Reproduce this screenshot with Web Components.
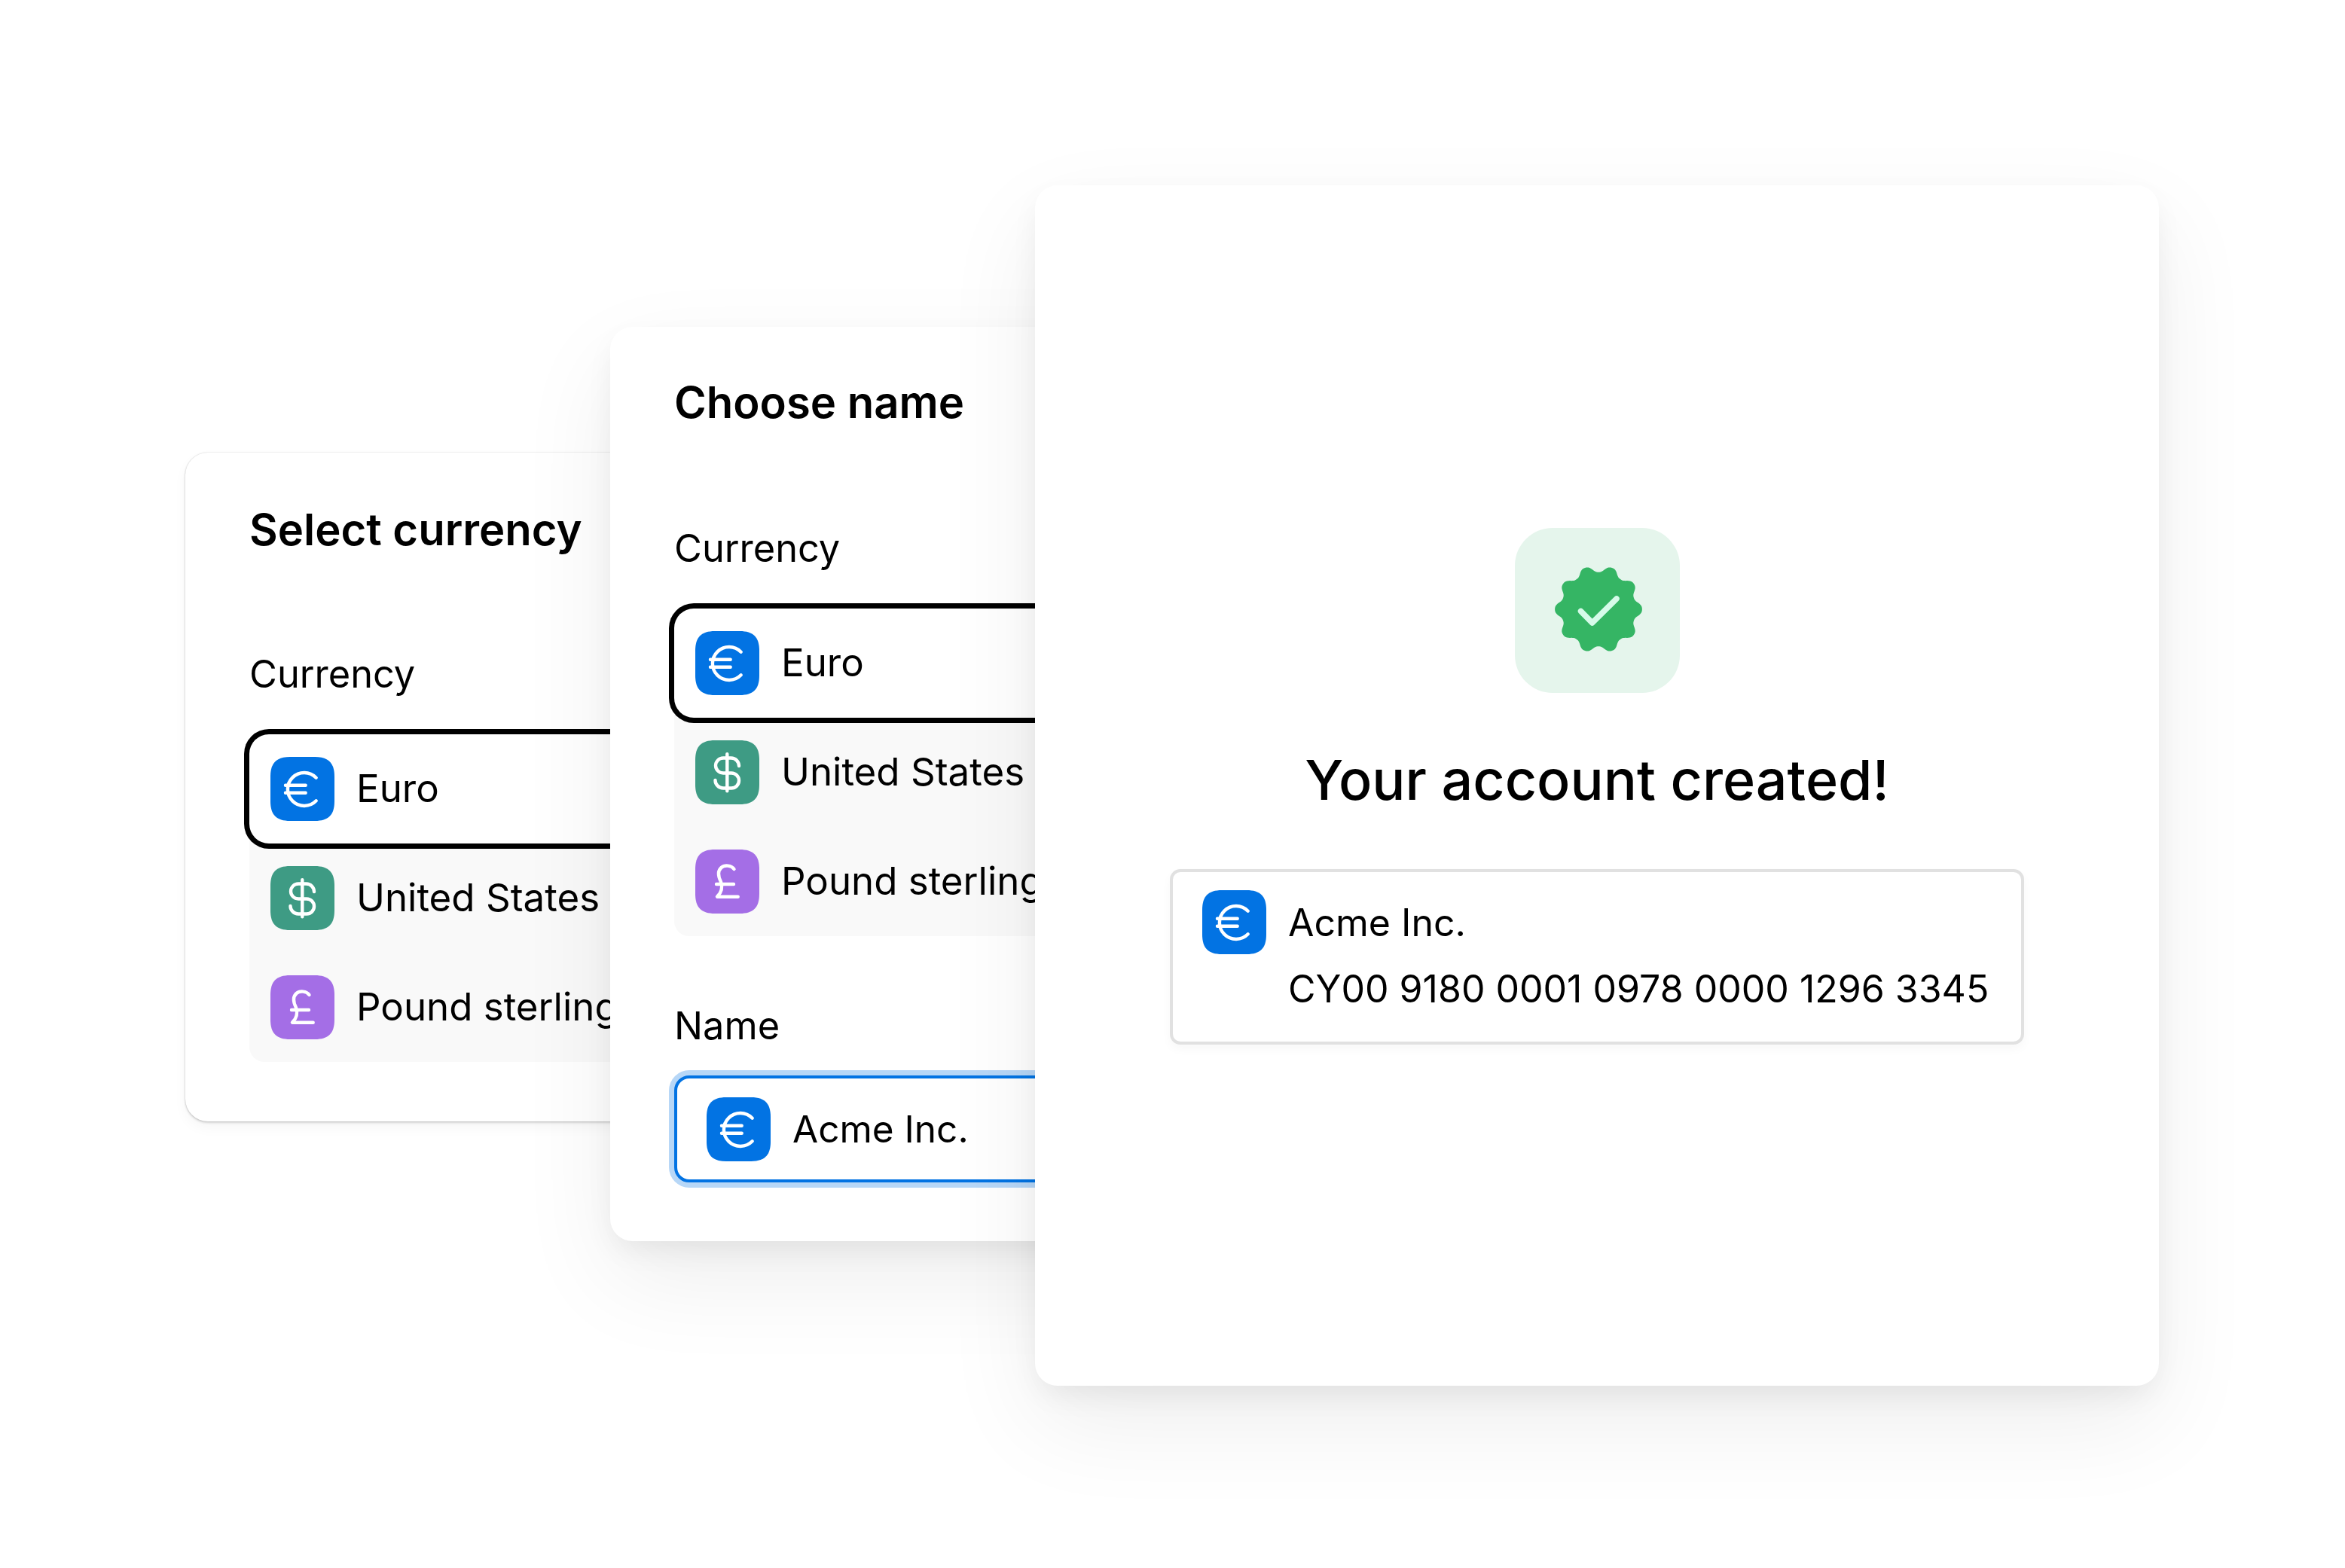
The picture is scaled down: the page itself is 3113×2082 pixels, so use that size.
<!DOCTYPE html>
<html>
<head>
<meta charset="utf-8">
<title>Account flow</title>
<style>
  html, body { margin: 0; padding: 0; background: #fff; }
  body {
    font-family: Inter, "Liberation Sans", sans-serif;
    color: #000;
    --lift: 0 16px 40px -8px rgba(0,0,0,.08), 0 50px 130px rgba(0,0,0,.07);
  }
</style>
</head>
<body>
<flow-stage>
  <form-card heading="Select currency" style="left:246px;top:601px;height:888px;--edge:0 0 2px rgba(0,0,0,.2), 0 2px 3px rgba(0,0,0,.14), 0 8px 18px rgba(0,0,0,.04);z-index:1">
    <currency-list></currency-list>
  </form-card>
  <form-card heading="Choose name" style="left:810px;top:434px;height:1214px;--edge:var(--lift);--nudge:2px;z-index:2">
    <currency-list></currency-list>
    <name-field></name-field>
  </form-card>
  <done-card></done-card>
</flow-stage>

<script>
const stageTpl = document.createElement('template');
stageTpl.innerHTML = `
  <style>
    :host { display: block; position: relative; width: 3113px; height: 2082px; overflow: hidden; }
  </style>
  <slot></slot>
`;
class FlowStage extends HTMLElement {
  constructor() {
    super();
    this.attachShadow({mode: 'open'});
    this.shadowRoot.appendChild(stageTpl.content.cloneNode(true));
  }
}
customElements.define('flow-stage', FlowStage);

// icon tile, same squircle for all three currencies
const ICONS = {
  euro: {bg: '#0273e3', d: 'M60.7 27.7A22 22 0 1 0 60.7 58.3M20 37.7H46.7M20 47.7H46.7'},
  dollar: {bg: '#3e9b84', d: 'M42.3 18.3V67.3M58 34A10.5 10.5 0 0 0 47.5 23.5H37A10 10 0 0 0 37 43.5H48A10 10 0 0 1 48 63.5H37A10.5 10.5 0 0 1 26.5 53'},
  pound: {bg: '#a46ee6', d: 'M51.5 26C48 21 39 20 34.5 24C29 29 31 37 34 43C36 49 36 56 29 62.7H56.7M28 46H51'}
};
class CurrencyIcon extends HTMLElement {
  constructor() {
    super();
    const icon = ICONS[this.getAttribute('type')] || ICONS.euro;
    this.attachShadow({mode: 'open'});
    this.shadowRoot.innerHTML = `
      <style>
        :host { display: block; width: 85px; height: 85px; flex: none; }
        svg { display: block; }
      </style>
      <svg width="85" height="85" viewBox="0 0 85 85">
        <path fill="${icon.bg}" d="M26 0H59C77 0 85 8 85 26V59C85 77 77 85 59 85H26C8 85 0 77 0 59V26C0 8 8 0 26 0Z"/>
        <path fill="none" stroke="#fff" stroke-width="4.4" stroke-linecap="round" stroke-linejoin="round" d="${icon.d}"/>
      </svg>
    `;
  }
}
customElements.define('currency-icon', CurrencyIcon);

const listTpl = document.createElement('template');
listTpl.innerHTML = `
  <style>
    :host { display: block; width: 900px; background: #f9f9f9; border-radius: 20px; }
    .row {
      display: flex;
      align-items: center;
      gap: 29px;
      height: 145px;
      padding-left: 28px;
      font-size: 51px;
    }
    .row span { padding-bottom: 3px; }
    .row.selected {
      background: #fff;
      border-radius: 26px;
      box-shadow: 0 0 0 7px #000;
    }
  </style>
  <div class="row selected"><currency-icon type="euro"></currency-icon><span>Euro</span></div>
  <div class="row"><currency-icon type="dollar"></currency-icon><span>United States</span></div>
  <div class="row"><currency-icon type="pound"></currency-icon><span>Pound sterling</span></div>
`;
class CurrencyList extends HTMLElement {
  constructor() {
    super();
    this.attachShadow({mode: 'open'});
    this.shadowRoot.appendChild(listTpl.content.cloneNode(true));
  }
}
customElements.define('currency-list', CurrencyList);

const fieldTpl = document.createElement('template');
fieldTpl.innerHTML = `
  <style>
    :host { display: block; margin-top: 89px; }
    .label { height: 60px; line-height: 60px; font-size: 50.5px; }
    .input {
      display: flex;
      align-items: center;
      gap: 29px;
      box-sizing: border-box;
      width: 900px;
      height: 142px;
      margin-top: 36px;
      padding-left: 39px;
      font-size: 49.5px;
      background: #fff;
      border: 4px solid #0273e3;
      border-radius: 20px;
      box-shadow: 0 0 0 7px #b7d7f7;
    }
  </style>
  <div class="label">Name</div>
  <div class="input"><currency-icon type="euro"></currency-icon><span>Acme Inc.</span></div>
`;
class NameField extends HTMLElement {
  constructor() {
    super();
    this.attachShadow({mode: 'open'});
    this.shadowRoot.appendChild(fieldTpl.content.cloneNode(true));
  }
}
customElements.define('name-field', NameField);

class FormCard extends HTMLElement {
  constructor() {
    super();
    this.attachShadow({mode: 'open'});
    this.shadowRoot.innerHTML = `
      <style>
        :host {
          display: block;
          position: absolute;
          box-sizing: border-box;
          width: 1000px;
          padding: calc(67px - var(--nudge, 0px)) 0 0 85px;
          background: #fff;
          border-radius: 30px;
          box-shadow: var(--edge);
        }
        h2 { margin: 0; height: 70px; line-height: 70px; font-size: 58px; font-weight: 600; }
        .label { margin: calc(127px + var(--nudge, 0px)) 0 50px; height: 60px; line-height: 60px; font-size: 50.5px; }
      </style>
      <h2>${this.getAttribute('heading')}</h2>
      <div class="label">Currency</div>
      <slot></slot>
    `;
  }
}
customElements.define('form-card', FormCard);

// wavy 10 lobe seal with a tick in it
class SealIcon extends HTMLElement {
  constructor() {
    super();
    let d = '';
    for (let i = 0; i < 240; i++) {
      const a = i / 240 * Math.PI * 2;
      const r = 53.6 + 4.6 * Math.cos(10 * a) - 0.3 * Math.cos(30 * a);
      d += (i ? 'L' : 'M') + (60 + r * Math.cos(a)).toFixed(2) + ' ' + (60 + r * Math.sin(a)).toFixed(2);
    }
    this.attachShadow({mode: 'open'});
    this.shadowRoot.innerHTML = `
      <style>
        :host { display: block; width: 120px; height: 120px; margin: -4px 0 0 3px; }
        svg { display: block; }
      </style>
      <svg width="120" height="120" viewBox="0 0 120 120">
        <path fill="#35b564" d="${d}Z"/>
        <path fill="none" stroke="#d6fbe9" stroke-width="7.5" stroke-linecap="round" stroke-linejoin="round" d="M36.5 62.5L51.7 78L84 46"/>
      </svg>
    `;
  }
}
customElements.define('seal-icon', SealIcon);

const boxTpl = document.createElement('template');
boxTpl.innerHTML = `
  <style>
    :host {
      display: grid;
      grid-template-columns: 85px auto;
      grid-auto-rows: 88px;
      column-gap: 29px;
      box-sizing: border-box;
      width: 1134px;
      height: 233px;
      padding: 23px 39px;
      background: #fff;
      border: 4px solid #e1e1e1;
      border-radius: 14px;
      box-shadow: 0 6px 14px rgba(0,0,0,.03);
      font-size: 50px;
      line-height: 88px;
    }
    currency-icon { margin-top: 1px; }
    .iban { grid-column: 2; white-space: nowrap; }
  </style>
  <currency-icon type="euro"></currency-icon>
  <span>Acme Inc.</span>
  <span class="iban">CY00 9180 0001 0978 0000 1296 3345</span>
`;
class AccountBox extends HTMLElement {
  constructor() {
    super();
    this.attachShadow({mode: 'open'});
    this.shadowRoot.appendChild(boxTpl.content.cloneNode(true));
  }
}
customElements.define('account-box', AccountBox);

const doneTpl = document.createElement('template');
doneTpl.innerHTML = `
  <style>
    :host {
      display: flex;
      flex-direction: column;
      align-items: center;
      position: absolute;
      z-index: 3;
      left: 1374px;
      top: 246px;
      box-sizing: border-box;
      width: 1492px;
      height: 1594px;
      padding-top: 455px;
      background: #fff;
      border-radius: 30px;
      box-shadow: var(--lift);
    }
    .tile {
      display: flex;
      align-items: center;
      justify-content: center;
      width: 219px;
      height: 219px;
      background: #e5f5ec;
      border-radius: 50px;
    }
    h1 {
      margin: 70px 0 72px;
      height: 92px;
      line-height: 92px;
      font-size: 73.5px;
      font-weight: 500;
    }
  </style>
  <div class="tile"><seal-icon></seal-icon></div>
  <h1>Your account created!</h1>
  <account-box></account-box>
`;
class DoneCard extends HTMLElement {
  constructor() {
    super();
    this.attachShadow({mode: 'open'});
    this.shadowRoot.appendChild(doneTpl.content.cloneNode(true));
  }
}
customElements.define('done-card', DoneCard);
</script>
</body>
</html>
